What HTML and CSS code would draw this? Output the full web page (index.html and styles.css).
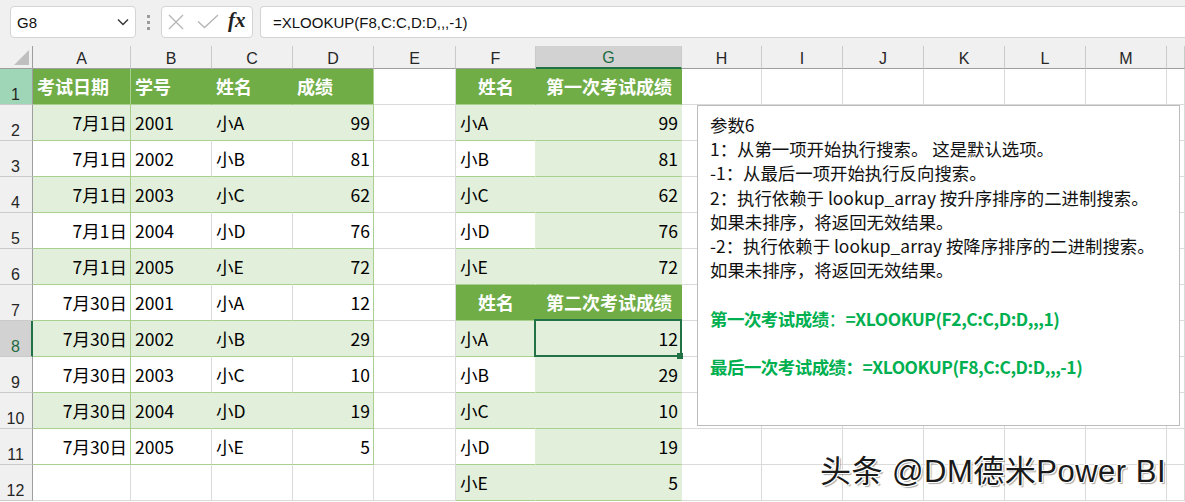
FILE: index.html
```html
<!DOCTYPE html>
<html lang="zh-CN">
<head>
<meta charset="utf-8">
<title>XLOOKUP</title>
<link rel="stylesheet" href="styles.css">
</head>
<body>
<div class="fbar">
  <div class="namebox"><span>G8</span>
    <svg class="chev" width="12" height="8" viewBox="0 0 12 8"><polyline points="1,1.5 6,6.5 11,1.5" fill="none" stroke="#333" stroke-width="1.4"/></svg>
  </div>
  <div class="dots"><span></span><span></span><span></span></div>
  <div class="fxbox">
    <svg class="ico-x" width="16" height="16" viewBox="0 0 16 16"><path d="M1 1 L15 15 M15 1 L1 15" stroke="#b4b4b4" stroke-width="1.3" fill="none"/></svg>
    <svg class="ico-ok" width="22" height="15" viewBox="0 0 22 15"><polyline points="1,7.5 7.5,13.5 21,1" fill="none" stroke="#b4b4b4" stroke-width="1.3"/></svg>
    <span class="fx">fx</span>
  </div>
  <div class="formula">=XLOOKUP(F8,C:C,D:D,,,-1)</div>
</div>

<div class="sheet">
  <!-- column headers -->
  <div class="corner"><svg width="15" height="15" viewBox="0 0 15 15"><polygon points="15,0 15,15 0,15" fill="#bfbfbf"/></svg></div>
  <div class="ch">A</div><div class="ch">B</div><div class="ch">C</div><div class="ch">D</div><div class="ch">E</div><div class="ch">F</div><div class="ch sel">G</div><div class="ch">H</div><div class="ch">I</div><div class="ch">J</div><div class="ch">K</div><div class="ch">L</div><div class="ch">M</div><div class="ch"></div>

  <!-- row 1 -->
  <div class="rh r1">1</div>
  <div class="c hd ea">考试日期</div><div class="c hd">学号</div><div class="c hd">姓名</div><div class="c hd ea">成绩</div>
  <div class="c"></div>
  <div class="c hd ctr">姓名</div><div class="c hd ctr">第一次考试成绩</div>
  <div class="c"></div><div class="c"></div><div class="c"></div><div class="c"></div><div class="c"></div><div class="c"></div><div class="c"></div>

  <!-- row 2 -->
  <div class="rh">2</div>
  <div class="c r tb band ea">7月1日</div><div class="c tb band">2001</div><div class="c tb band">小A</div><div class="c r tb band ea">99</div>
  <div class="c"></div>
  <div class="c tb band">小A</div><div class="c r tb band">99</div>
  <div class="c"></div><div class="c"></div><div class="c"></div><div class="c"></div><div class="c"></div><div class="c"></div><div class="c"></div>

  <!-- row 3 -->
  <div class="rh">3</div>
  <div class="c r tb ea">7月1日</div><div class="c tb">2002</div><div class="c tb">小B</div><div class="c r tb ea">81</div>
  <div class="c"></div>
  <div class="c tb fw">小B</div><div class="c r tb band">81</div>
  <div class="c"></div><div class="c"></div><div class="c"></div><div class="c"></div><div class="c"></div><div class="c"></div><div class="c"></div>

  <!-- row 4 -->
  <div class="rh">4</div>
  <div class="c r tb band ea">7月1日</div><div class="c tb band">2003</div><div class="c tb band">小C</div><div class="c r tb band ea">62</div>
  <div class="c"></div>
  <div class="c tb band">小C</div><div class="c r tb band">62</div>
  <div class="c"></div><div class="c"></div><div class="c"></div><div class="c"></div><div class="c"></div><div class="c"></div><div class="c"></div>

  <!-- row 5 -->
  <div class="rh">5</div>
  <div class="c r tb ea">7月1日</div><div class="c tb">2004</div><div class="c tb">小D</div><div class="c r tb ea">76</div>
  <div class="c"></div>
  <div class="c tb fw">小D</div><div class="c r tb band">76</div>
  <div class="c"></div><div class="c"></div><div class="c"></div><div class="c"></div><div class="c"></div><div class="c"></div><div class="c"></div>

  <!-- row 6 -->
  <div class="rh">6</div>
  <div class="c r tb band ea">7月1日</div><div class="c tb band">2005</div><div class="c tb band">小E</div><div class="c r tb band ea">72</div>
  <div class="c"></div>
  <div class="c tb band">小E</div><div class="c r tb band">72</div>
  <div class="c"></div><div class="c"></div><div class="c"></div><div class="c"></div><div class="c"></div><div class="c"></div><div class="c"></div>

  <!-- row 7 -->
  <div class="rh">7</div>
  <div class="c r tb ea">7月30日</div><div class="c tb">2001</div><div class="c tb">小A</div><div class="c r tb ea">12</div>
  <div class="c"></div>
  <div class="c hd ctr">姓名</div><div class="c hd ctr">第二次考试成绩</div>
  <div class="c"></div><div class="c"></div><div class="c"></div><div class="c"></div><div class="c"></div><div class="c"></div><div class="c"></div>

  <!-- row 8 -->
  <div class="rh sel">8</div>
  <div class="c r tb band ea">7月30日</div><div class="c tb band">2002</div><div class="c tb band">小B</div><div class="c r tb band ea">29</div>
  <div class="c"></div>
  <div class="c tb band">小A</div><div class="c r tb band active">12</div>
  <div class="c"></div><div class="c"></div><div class="c"></div><div class="c"></div><div class="c"></div><div class="c"></div><div class="c"></div>

  <!-- row 9 -->
  <div class="rh">9</div>
  <div class="c r tb ea">7月30日</div><div class="c tb">2003</div><div class="c tb">小C</div><div class="c r tb ea">10</div>
  <div class="c"></div>
  <div class="c tb fw">小B</div><div class="c r tb band">29</div>
  <div class="c"></div><div class="c"></div><div class="c"></div><div class="c"></div><div class="c"></div><div class="c"></div><div class="c"></div>

  <!-- row 10 -->
  <div class="rh">10</div>
  <div class="c r tb band ea">7月30日</div><div class="c tb band">2004</div><div class="c tb band">小D</div><div class="c r tb band ea">19</div>
  <div class="c"></div>
  <div class="c tb band">小C</div><div class="c r tb band">10</div>
  <div class="c"></div><div class="c"></div><div class="c"></div><div class="c"></div><div class="c"></div><div class="c"></div><div class="c"></div>

  <!-- row 11 -->
  <div class="rh">11</div>
  <div class="c r tb ea">7月30日</div><div class="c tb">2005</div><div class="c tb">小E</div><div class="c r tb ea">5</div>
  <div class="c"></div>
  <div class="c tb fw">小D</div><div class="c r tb band">19</div>
  <div class="c"></div><div class="c"></div><div class="c"></div><div class="c"></div><div class="c"></div><div class="c"></div><div class="c"></div>

  <!-- row 12 -->
  <div class="rh">12</div>
  <div class="c"></div><div class="c"></div><div class="c"></div><div class="c"></div>
  <div class="c"></div>
  <div class="c tb band">小E</div><div class="c r tb band">5</div>
  <div class="c"></div><div class="c"></div><div class="c"></div><div class="c"></div><div class="c"></div><div class="c"></div><div class="c"></div>

  <div class="textbox">
    <p>参数6</p>
    <p>1：从第一项开始执行搜索。 这是默认选项。</p>
    <p>-1：从最后一项开始执行反向搜索。</p>
    <p>2：执行依赖于 lookup_array 按升序排序的二进制搜索。</p>
    <p>如果未排序，将返回无效结果。</p>
    <p>-2：执行依赖于 lookup_array 按降序排序的二进制搜索。</p>
    <p>如果未排序，将返回无效结果。</p>
    <p class="blank"></p>
    <p class="green">第一次考试成绩<span class="thin">：</span>=XLOOKUP(F2,C:C,D:D,,,1)</p>
    <p class="blank"></p>
    <p class="green">最后一次考试成绩：=XLOOKUP(F8,C:C,D:D,,,-1)</p>
  </div>

  <div class="watermark">头条 @DM德米Power BI</div>
</div>
</body>
</html>
```

FILE: styles.css
```css
* { box-sizing: border-box; margin: 0; padding: 0; }
html, body { width: 1185px; height: 502px; overflow: hidden; background: #fff; }
body { font-family: "Liberation Sans", "Noto Sans CJK SC", sans-serif; color: #000; }

/* formula bar */
.fbar { height: 46px; background: #f0f0f0; display: flex; align-items: flex-start; padding-top: 6px; }
.namebox { margin-left: 10px; width: 126px; height: 32px; background: #fff; border: 1px solid #d4d4d4; border-radius: 4px; display: flex; align-items: center; justify-content: space-between; padding: 0 6px 0 6px; font-size: 15px; color: #111; }
.chev { display: block; }
.dots { margin-left: 11px; margin-top: 9px; display: flex; flex-direction: column; gap: 3px; }
.dots span { display: block; width: 3px; height: 3px; background: #9c9c9c; }
.fxbox { margin-left: 11px; width: 92px; height: 32px; background: #fff; border: 1px solid #d4d4d4; border-radius: 4px; display: flex; align-items: center; padding-left: 6px; }
.ico-x { display: block; }
.ico-ok { display: block; margin-left: 13px; margin-top: -1px; }
.fx { font-family: "Liberation Serif", serif; font-style: italic; font-weight: bold; font-size: 21px; margin-left: 9px; color: #222; line-height: 1; margin-top: -3px; }
.formula { margin-left: 7px; flex: 1; height: 32px; background: #fff; border: 1px solid #d4d4d4; border-right: none; border-radius: 4px 0 0 4px; display: flex; align-items: center; padding-left: 12px; font-size: 15px; color: #111; }

/* sheet grid */
.sheet { position: relative; display: grid; grid-template-columns: 33px 98px 81px 81px 81px 82px 80px 146px 80px 81px 81px 81px 81px 81px 1fr; grid-template-rows: 23px repeat(12, 36px); }

.corner { background: #f0f0f0; border-right: 1px solid #9e9e9e; border-bottom: 1px solid #9e9e9e; display: flex; align-items: flex-end; justify-content: flex-end; padding: 0 3px 3px 0; }
.corner svg { display: block; }

.ch { background: #f0f0f0; border-right: 1px solid #cacaca; border-bottom: 1px solid #9e9e9e; display: flex; align-items: flex-end; justify-content: center; font-size: 16px; line-height: 18px; color: #262626; }
.ch.sel { background: #d2d2d2; border-bottom: 2px solid #217346; color: #1e6b40; }

.rh { background: #f0f0f0; border-right: 1px solid #9e9e9e; border-bottom: 1px solid #cacaca; display: flex; align-items: flex-end; justify-content: center; font-size: 16px; line-height: 18px; color: #262626; padding-right: 1px; }
.rh.r1 { background: #9fd6b8; }
.rh.sel { background: #d2d2d2; border-right: 2px solid #217346; color: #1e6b40; padding-right: 0; }

.c { border-right: 1px solid #dadada; border-bottom: 1px solid #dadada; display: flex; align-items: flex-end; justify-content: flex-start; padding: 0 3px 7px 4px; font-family: "Noto Sans CJK SC", "Liberation Sans", sans-serif; font-size: 17.5px; line-height: 20px; color: #000; white-space: nowrap; }
.c.r { justify-content: flex-end; padding-right: 3px; }
.c.ctr { justify-content: center; }
.c.tb { border-bottom-color: #a9d08e; }
.c.band { background: #e2efda; border-right-color: #e2efda; }
.c.fw { border-right-color: #e2efda; }
.c.hd { background: #70ad47; color: #fff; font-weight: bold; font-size: 18px; border-right-color: #70ad47; border-bottom-color: #a9d08e; padding-bottom: 8px; }
.c.ea { border-right-color: #a9d08e; }

.c.active { position: relative; }
.c.active::before { content: ""; position: absolute; left: -2px; top: -2px; right: -1px; bottom: -1px; border: 2px solid #217346; z-index: 2; }
.c.active::after { content: ""; position: absolute; right: -2px; bottom: -3px; width: 6px; height: 6px; background: #217346; z-index: 3; }

/* floating text box */
.textbox { position: absolute; left: 697px; top: 59px; width: 483px; height: 321px; background: #fff; border: 1px solid #bcbcbc; padding: 7px 12px; font-family: "Noto Sans CJK SC", "Liberation Sans", sans-serif; font-size: 17.4px; line-height: 24.2px; color: #111; z-index: 4; }
.textbox p { white-space: nowrap; }
.textbox .blank { height: 24.2px; }
.textbox .green { color: #00b050; font-weight: bold; letter-spacing: -0.45px; }
.textbox .thin { font-weight: normal; }

.watermark { position: absolute; left: 820px; top: 408px; font-family: "Liberation Sans", "Noto Sans CJK SC", sans-serif; font-size: 31px; line-height: 36px; letter-spacing: 0.5px; color: #1a1a1a; white-space: nowrap; z-index: 5; text-shadow: 1px 1px 0 #fff, -1px -1px 0 #fff, 1px -1px 0 #fff, -1px 1px 0 #fff, 2px 2px 1px rgba(0,0,0,0.35); }
```
